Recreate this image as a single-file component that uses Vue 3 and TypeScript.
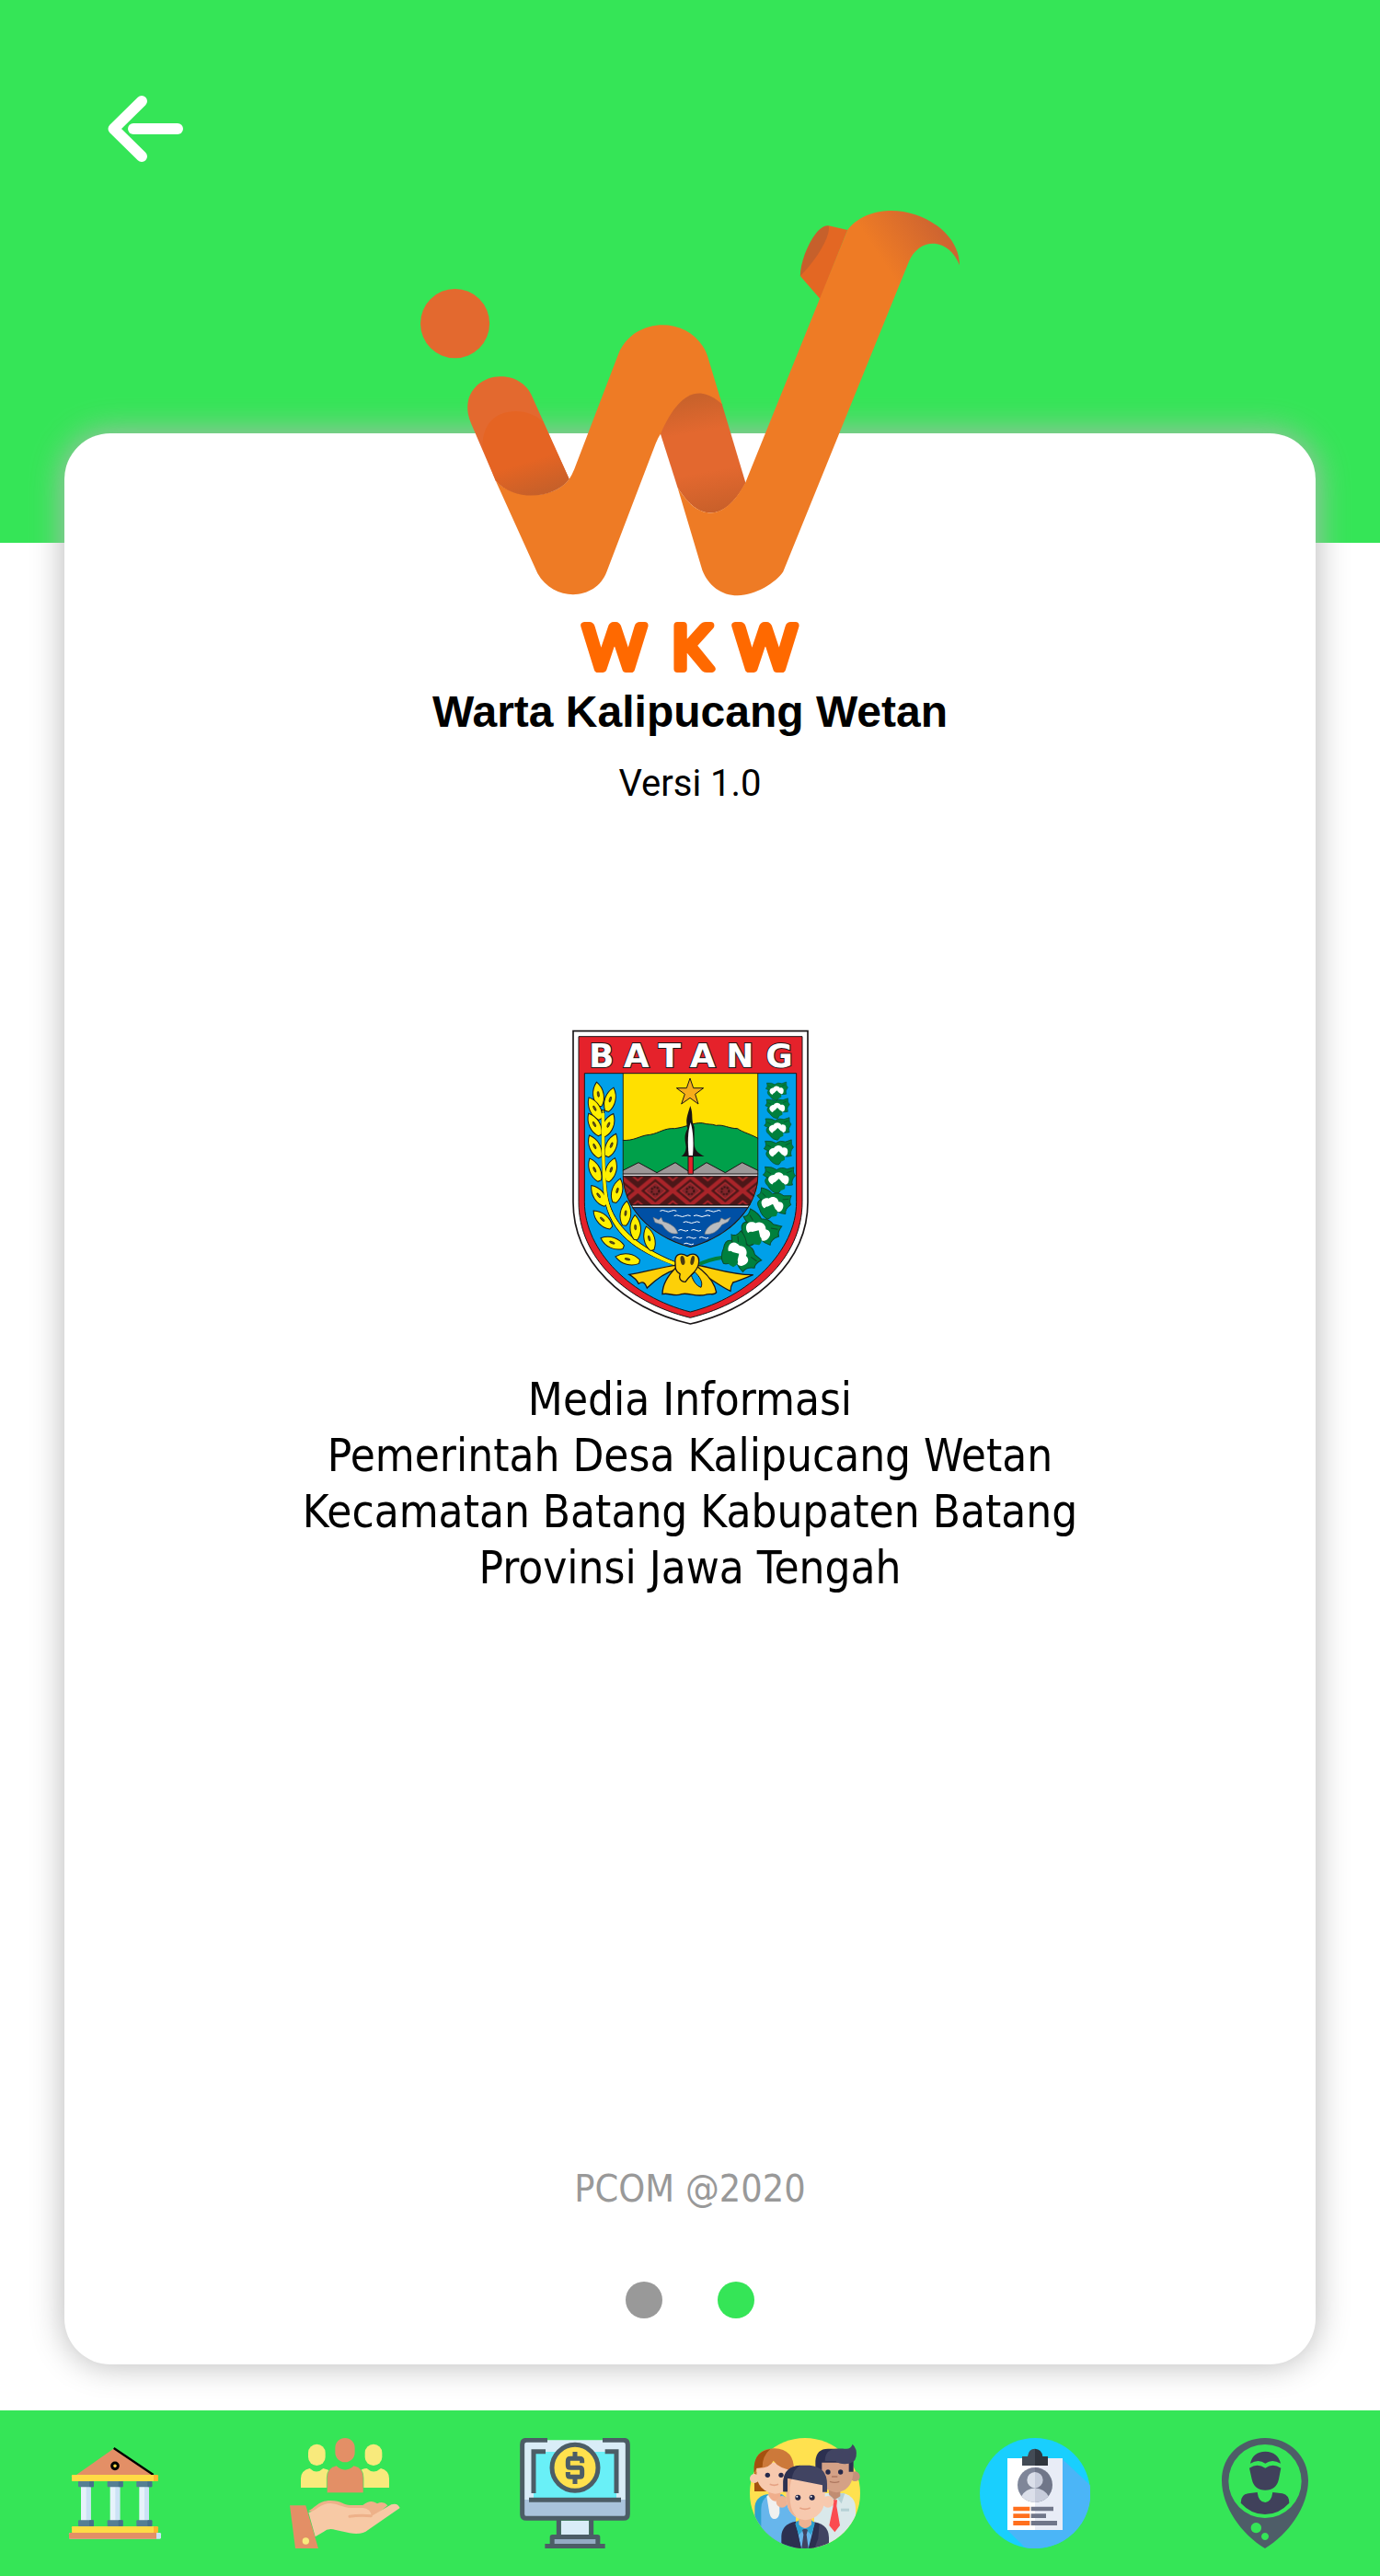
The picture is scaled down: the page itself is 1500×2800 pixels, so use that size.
<script setup lang="ts">
import { ref } from 'vue'

interface Leaf { x: number; y: number; r: number }
interface Boll { x: number; y: number; r: number; s: number }

const addressLines: string[] = [
  'Media Informasi',
  'Pemerintah Desa Kalipucang Wetan',
  'Kecamatan Batang Kabupaten Batang',
  'Provinsi Jawa Tengah',
]

const slides: string[] = ['Slide 1', 'Slide 2']
const current = ref<number>(1)

const riceLeaves: Leaf[] = [
  { x: 121, y: 238, r: -8 }, { x: 160, y: 255, r: 16 }, { x: 109, y: 284, r: -28 },
  { x: 154, y: 338, r: 24 }, { x: 108, y: 336, r: -28 }, { x: 164, y: 404, r: 22 },
  { x: 109, y: 408, r: -26 }, { x: 163, y: 484, r: 18 }, { x: 109, y: 484, r: -24 },
  { x: 183, y: 552, r: 14 }, { x: 122, y: 568, r: -36 }, { x: 210, y: 626, r: 6 },
  { x: 134, y: 646, r: -46 }, { x: 242, y: 672, r: -2 }, { x: 166, y: 722, r: -68 },
  { x: 287, y: 708, r: -14 }, { x: 216, y: 776, r: -78 },
]

const bolls: Boll[] = [
  { x: 703, y: 226, r: 0, s: 0.82 }, { x: 705, y: 282, r: 0, s: 0.9 },
  { x: 706, y: 348, r: 0, s: 1 }, { x: 709, y: 424, r: 0, s: 1.1 },
  { x: 710, y: 514, r: 4, s: 1.2 }, { x: 690, y: 596, r: 18, s: 1.3 },
  { x: 644, y: 682, r: 32, s: 1.5 }, { x: 580, y: 758, r: 58, s: 1.5 },
]
</script>

<template>
  <div class="page">
    <header class="top">
      <button class="back" type="button" aria-label="Kembali">
        <svg viewBox="110 100 96 80" width="96" height="80" fill="none" stroke="#fff" stroke-width="12" stroke-linecap="round" stroke-linejoin="round">
          <path d="M154 110 L123.500 140 L154 170" />
          <path d="M145 140 H193" />
        </svg>
      </button>
    </header>

    <main class="card">
      <svg class="logo" viewBox="0 0 620 550" role="img" aria-label="WKW">
        <defs>
          <linearGradient id="hook" gradientUnits="userSpaceOnUse" x1="1290" y1="210" x2="1450" y2="120">
            <stop offset="0" stop-color="#ee7b25" /><stop offset="1" stop-color="#cf6530" />
          </linearGradient>
          <linearGradient id="fold" gradientUnits="userSpaceOnUse" x1="780" y1="700" x2="860" y2="1065">
            <stop offset="0" stop-color="#c9622b" /><stop offset=".3" stop-color="#e3682f" />
            <stop offset=".65" stop-color="#e3682f" /><stop offset="1" stop-color="#c9602a" />
          </linearGradient>
          <linearGradient id="start" gradientUnits="userSpaceOnUse" x1="325" y1="910" x2="362" y2="1010">
            <stop offset="0" stop-color="#e56423" /><stop offset="1" stop-color="#c76029" />
          </linearGradient>
        </defs>
        <g transform="scale(.3954 .3333)">
          <ellipse cx="138" cy="455" rx="95" ry="113" fill="#e3692f" />
          <path fill="#ee7b25" d="M250 968 C300 1030 410 1030 452 962 Q460 948 466 930 L588 552 C630 430 790 425 832 560 L872 718 L780 800 L703 815 Q697 825 690 845 L555 1265 C525 1360 410 1365 365 1270Z" />
          <path fill="#e3692f" d="M182 780 C150 690 205 628 263 628 C310 628 340 660 352 698 L452 962 L250 968Z" />
          <path fill="url(#start)" d="M214 862 C210 790 245 741 305 741 C335 741 362 755 380 775 L452 962 C410 1030 300 1035 250 968Z" />
          <path fill="url(#fold)" d="M703 815 C745 700 800 640 872 718 L937 975 C880 1100 810 1105 750 990Z" />
          <path fill="#e36723" d="M1165 136 L1217 150 L1142 375 L1087 300Z" />
          <path fill="#c6602b" d="M1165 136 C1130 130 1087 240 1087 300 C1130 250 1172 170 1165 136Z" />
          <path fill="url(#hook)" d="M750 990 C810 1105 880 1100 937 972 L1217 150 C1250 100 1300 87 1337 87 C1430 87 1525 165 1525 265 C1495 175 1415 170 1385 255 L1040 1265 C1020 1300 965 1342 915 1342 C870 1342 835 1310 818 1260Z" />
        </g>
        <text class="wordmark" x="228 312 392" y="527">WKW</text>
      </svg>

      <h1 class="title">Warta Kalipucang Wetan</h1>
      <p class="version">Versi 1.0</p>

      <svg class="crest" viewBox="0 0 840 1020" role="img" aria-label="Lambang Kabupaten Batang">
        <defs>
          <clipPath id="field">
            <path d="M200 170 H643 V500 C643 600 560 700 421 738 C280 700 200 600 200 500Z" />
          </clipPath>
          <pattern id="batik" patternUnits="userSpaceOnUse" x="364" y="506" width="114" height="94">
            <rect width="114" height="94" fill="#4c1718" />
            <path d="M57 0 L114 47 L57 94 L0 47Z" fill="none" stroke="#aa2429" stroke-width="13" />
            <path d="M57 20 L90 47 L57 74 L24 47Z" fill="#81252a" stroke="#c12a30" stroke-width="3" />
            <circle cx="57" cy="47" r="12" fill="none" stroke="#32100f" stroke-width="6" stroke-dasharray="6 4" />
            <path d="M-8 20 L16 0 M98 0 L122 20 M-8 74 L16 94 M98 94 L122 74" stroke="#aa2429" stroke-width="6" />
          </pattern>
        </defs>
        <g stroke="#1b1718">
          <path fill="#fff" stroke-width="5" d="M39 32 H804 V590 C804 780 640 935 421 987 C200 935 39 780 39 590Z" />
          <path fill="#e5222b" stroke-width="3" d="M57 50 H786 V590 C786 770 630 915 421 967 C210 915 57 770 57 590Z" />
          <path fill="#00a0e9" stroke-width="3" d="M76 170 H767 V590 C767 750 610 900 421 948 C230 900 76 750 76 590Z" />
        </g>
        <g clip-path="url(#field)" stroke="#1b1718" stroke-width="3">
          <rect x="200" y="170" width="443" height="570" fill="#ffe000" />
          <path fill="#00a04a" d="M195 388 C240 392 255 372 290 370 C320 365 335 348 370 350 C410 345 430 330 460 332 C480 338 490 334 505 340 C530 336 545 350 575 350 C590 362 625 370 648 386 V500 H195Z" />
          <path fill="#9d9898" d="M195 490 L252 461 L312 494 L372 461 L422 494 L474 461 L535 494 L590 461 L648 490 V500 H195Z" />
          <rect x="195" y="498" width="453" height="10" fill="#ded6d7" />
          <rect x="195" y="506" width="453" height="94" fill="url(#batik)" />
          <rect x="195" y="600" width="453" height="9" fill="#ded6d7" />
          <rect x="195" y="608" width="453" height="140" fill="#0050a5" />
          <g fill="none" stroke="#fff">
            <path d="M322 619 q9 -5 18 0 t18 0 t18 0 M470 619 q9 -5 18 0 t18 0 t14 0 M368 635 q9 -5 18 0 t18 0 t18 0 M432 635 q9 -5 18 0 t18 0 t18 0 M398 656 q9 -5 18 0 t18 0 t18 0 M382 682 q8 -5 16 0 t16 0 M424 682 q8 -5 16 0 t16 0 M362 706 q8 -5 16 0 t16 0 M408 706 q8 -5 16 0 t16 0 M450 706 q8 -5 16 0 t14 0 M400 726 q8 -5 16 0 t16 0" />
          </g>
          <g fill="#b9bcc0" stroke="#777b80" stroke-width="2">
            <path d="M300 640 L318 648 L326 640 L332 653 C358 660 375 672 380 692 C355 698 340 680 330 664 L306 656Z" />
            <path d="M552 640 L534 648 L522 642 L516 654 C486 660 472 676 468 694 C495 698 512 682 524 664 L544 654Z" />
          </g>
          <path fill="none" stroke-width="6" d="M200 170 V500 C200 600 280 700 421 738 C560 700 643 600 643 500 V170" />
        </g>
        <path fill="#f6ad1b" stroke="#1b1718" stroke-width="3" d="M420 186 L431 218 H464 L437 238 L447 270 L420 250 L392 270 L403 238 L376 218 H409Z" />
        <path fill="#171315" d="M421 276 C410 310 405 325 412 350 C398 375 405 390 407 410 C406 430 398 436 391 441 H467 C445 430 433 420 434 395 V345 C422 320 432 305 421 276Z" />
        <path fill="#fff" d="M422 330 C412 360 412 400 416 438 H429 C432 400 431 360 422 330Z" />
        <path fill="#e5222b" stroke="#1b1718" stroke-width="3" d="M414 441 H430 V498 H414Z" />

        <text class="crest-name" x="131 245 353 461 583 711" y="150">BATANG</text>

        <g fill="#fff000" stroke="#1b1718" stroke-width="3">
          <path d="M132 290 C134 400 130 510 142 580 C160 690 240 750 372 796 L374 786 C250 735 172 670 152 575 C140 510 142 400 140 290Z" />
          <g v-for="(leaf, i) in riceLeaves" :key="i" :transform="`translate(${leaf.x} ${leaf.y}) rotate(${leaf.r})`">
            <path d="M0 -40 C22 -16 22 18 6 40 H-6 C-22 18 -22 -16 0 -40Z" />
            <ellipse rx="3" ry="9" fill="#6e5a12" stroke-width="2" />
          </g>
          <path fill="none" stroke="#fff000" stroke-width="10" d="M136 300 C138 400 134 510 147 578 C166 680 245 745 370 791" />
        </g>

        <path d="M450 792 Q500 770 552 768" fill="none" stroke="#00803d" stroke-width="12" />
        <g v-for="(boll, i) in bolls" :key="i" :transform="`translate(${boll.x} ${boll.y}) rotate(${boll.r}) scale(${boll.s})`">
          <path fill="#00803d" stroke="#0a4a2a" stroke-width="2" d="M0 6 C-14 2 -26 4 -44 -8 Q-34 -14 -40 -30 Q-20 -32 -8 -24 Q4 -34 20 -28 L38 -34 Q36 -18 44 -12 Q32 2 38 14 Q14 20 0 6 M-28 22 Q-42 10 -34 0 Q-12 -8 0 10 Q14 28 0 40 Q-16 40 -28 22Z" />
          <path fill="#fff" d="M-26 10 C-34 -2 -22 -10 -14 -10 C-6 -22 8 -18 12 -10 C24 -14 30 -4 26 8 C24 16 10 18 4 10 C-4 20 -20 20 -26 10Z" />
          <path fill="#00803d" d="M-18 26 Q-18 12 -10 10 L0 0 L10 10 Q20 12 18 26 Q0 38 -18 26Z" />
          <path d="M20 -18 L34 -24 M-34 -18 L-22 -12" stroke="#0a4a2a" stroke-width="2" />
        </g>

        <g stroke="#1b1718" stroke-width="4" fill="#fdd008">
          <path d="M375 796 C330 800 270 820 222 826 C245 840 250 850 252 856 C265 848 272 850 280 870 C300 850 330 822 378 808Z" />
          <path d="M446 796 C500 806 560 828 626 827 C595 840 575 848 560 852 C555 860 552 868 552 880 C520 866 490 840 440 812Z" />
          <path d="M378 800 C350 826 330 860 330 890 C350 884 370 900 392 890 C415 884 440 900 470 892 C485 886 500 896 506 884 C500 850 470 820 444 800Z" />
          <path fill="#00a0e9" stroke-width="3" d="M424 828 C432 850 440 862 456 868 C464 850 450 832 436 818Z" />
          <path stroke="none" d="M372 790 C368 760 388 752 411 766 C432 752 454 762 448 792 C444 812 424 820 408 836 L387 824 C374 815 372 805 372 790Z" />
          <path fill="none" d="M387 824 C372 815 372 805 372 790 C368 760 388 752 411 766 C432 752 454 762 448 792 C444 816 424 822 405 850 C385 848 384 836 388 822" />
        </g>
        <ellipse cx="396" cy="780" rx="7" ry="15" fill="#4b3b12" transform="rotate(-10 396 780)" />
        <ellipse cx="428" cy="780" rx="6" ry="15" fill="#4b3b12" transform="rotate(12 428 780)" />
      </svg>

      <address class="about">
        <span v-for="line in addressLines" :key="line">{{ line }}</span>
      </address>

      <footer class="bottom">
        <small class="copyright">PCOM @2020</small>
        <div class="dots">
          <button
            v-for="(slide, i) in slides"
            :key="slide"
            type="button"
            class="dot"
            :class="{ active: i === current }"
            :aria-label="slide"
            @click="current = i"
          ></button>
        </div>
      </footer>
    </main>

    <nav class="tabs">
      <a class="tab" href="#pemerintahan" aria-label="Pemerintahan">
        <svg viewBox="75 90 360 360">
          <path fill="#e38f66" d="M126 212 L254 122 L382 212Z" />
          <path stroke="#000" stroke-width="7" d="M251 123 L380 210" />
          <circle cx="255" cy="181" r="10" fill="#ffda44" stroke="#000" stroke-width="9" />
          <g v-for="x in [135, 230, 325]" :key="x">
            <rect :x="x + 9" y="245" width="32" height="118" fill="#e6f2fb" />
            <rect :x="x + 26" y="245" width="15" height="118" fill="#cbe2f5" />
            <rect :x="x" y="230" width="51" height="20" rx="3" fill="#557f93" />
            <rect :x="x + 36" y="230" width="15" height="20" rx="3" fill="#47708a" />
            <rect :x="x" y="358" width="51" height="20" rx="3" fill="#557f93" />
            <rect :x="x + 36" y="358" width="15" height="20" rx="3" fill="#47708a" />
          </g>
          <rect x="114" y="210" width="282" height="21" rx="4" fill="#ffb62f" />
          <path fill="#ffdb45" d="M118 210 H381 V231 H118 Q114 231 114 227 V214 Q114 210 118 210Z" />
          <rect x="114" y="378" width="282" height="21" rx="4" fill="#ffb62f" />
          <path fill="#ffdb45" d="M118 378 H381 V399 H118 Q114 399 114 395 V382 Q114 378 118 378Z" />
          <rect x="105" y="399" width="300" height="20" rx="4" fill="#cbe2f5" />
          <path fill="#e38f66" d="M109 399 H390 V419 H109 Q105 419 105 415 V403 Q105 399 109 399Z" />
        </svg>
      </a>
      <a class="tab" href="#layanan" aria-label="Layanan">
        <svg viewBox="825 90 360 360">
          <g fill="#f8ea7c">
            <rect x="885" y="110" width="56" height="70" rx="28" />
            <rect x="1070" y="110" width="56" height="70" rx="28" />
            <path d="M861 252 V222 Q861 196 890 189 Q912 210 934 189 Q950 192 960 200 V252Z" />
            <path d="M1149 252 V222 Q1149 196 1122 189 Q1098 210 1076 189 Q1060 190 1050 200 V252Z" />
          </g>
          <path fill="#e38f66" stroke="#35e557" stroke-width="2" d="M946 269 V220 Q946 186 977 180 Q1005 206 1034 180 Q1065 186 1065 220 V269Z" />
          <rect x="973" y="90" width="64" height="79" rx="32" fill="#e38f66" />
          <path fill="#edb189" d="M884 328 C905 322 915 294 958 294 C995 294 1000 310 1025 309 H1063 C1085 290 1100 297 1110 304 Q1130 294 1144 310 L1095 350 L1010 348Z" />
          <path fill="#f7c9a5" d="M886 333 C915 326 925 303 958 303 C988 305 1000 320 1030 318 H1063 Q1088 320 1092 344 L1156 307 Q1176 300 1184 318 L1080 390 Q1062 406 1020 400 L975 390 Q950 382 935 396 L908 412Z" />
          <path stroke="#edb189" stroke-width="9" stroke-linecap="round" fill="none" d="M1020 346 Q1050 341 1090 344" />
          <path fill="#e38f66" d="M825 310 H877 L918 450 H843Z" />
          <circle cx="877" cy="426" r="11" fill="#f8ea7c" />
        </svg>
      </a>
      <a class="tab" href="#keuangan" aria-label="Keuangan">
        <svg viewBox="75 90 360 360">
          <rect x="82" y="97" width="346" height="255" rx="12" fill="#d9edf7" />
          <path fill="#a9c3db" d="M82 291 H428 V340 Q428 352 416 352 H94 Q82 352 82 340Z" />
          <rect x="120" y="135" width="270" height="152" fill="#69f0f7" />
          <g fill="none" stroke="#4c5d66" stroke-width="15">
            <path d="M165 97 H97 Q83 97 83 111 V338 Q83 352 97 352 H413 Q427 352 427 338 V111 Q427 97 413 97 H345" />
            <path d="M120 270 V134 H159 M353 134 H390 V270 M105 292 H405" />
            <path fill="#d9edf7" d="M202 355 V412 M308 355 V412" />
          </g>
          <rect x="210" y="360" width="90" height="46" fill="#d9edf7" />
          <path fill="#4c5d66" d="M173 413 Q173 405 181 405 H328 Q337 405 337 413 V435 H353 V450 H157 V435 H173Z" />
          <rect x="188" y="420" width="134" height="15" fill="#94abc3" />
          <circle cx="255" cy="187" r="75" fill="#ffe14d" stroke="#4c5d66" stroke-width="15" />
          <path fill="none" stroke="#4c5d66" stroke-width="15" d="M278 172 V164 Q278 157 270 157 H240 Q232 157 232 165 V179 Q232 187 240 187 H270 Q278 187 278 195 V209 Q278 217 270 217 H240 Q232 217 232 209 V201 M255 135 V157 M255 217 V240" />
        </svg>
      </a>
      <a class="tab" href="#warga" aria-label="Warga">
        <svg viewBox="825 90 360 360">
          <defs><clipPath id="round"><path d="M820 80 H1190 V270 H1185 A180 180 0 0 1 825 270 H820Z" /></clipPath></defs>
          <circle cx="1005" cy="270" r="180" fill="#ffe14f" />
          <g clip-path="url(#round)">
            <path fill="#a4510f" d="M840 200 H880 V264 H840Z" />
            <path fill="#2da1cf" d="M841 450 V320 Q841 282 880 274 H930 L975 310 V450Z" />
            <path fill="#67b6ec" d="M862 450 V320 Q862 290 888 276 L905 320 L930 276 L975 310 V450Z" />
            <path fill="#f1f1ef" d="M880 280 L890 272 H922 V335 Q918 354 905 354 Q894 354 889 335Z" />
            <path fill="#f0ae8c" d="M886 250 H925 V285 Q905 310 886 278Z" />
            <circle cx="840" cy="222" r="15" fill="#f7c9ae" />
            <path fill="#f7c9ae" d="M847 170 H965 V210 Q962 268 908 272 Q850 264 847 210Z" />
            <path fill="#cc793a" d="M839 200 Q836 124 905 124 Q970 126 969 196 Q920 190 902 164 Q890 190 847 188 L846 210Z" />
            <path fill="#a4510f" d="M839 204 V184 Q842 134 892 126 Q866 148 866 185 L847 188Z" />
            <circle cx="883" cy="211" r="8" fill="#26294a" /><circle cx="927" cy="211" r="8" fill="#26294a" />
            <path d="M890 241 Q905 247 918 241" fill="none" stroke="#e6a284" stroke-width="5" />
            <path fill="#d9e8ea" d="M1035 450 V290 Q1040 272 1075 270 H1130 Q1170 280 1170 320 V450Z" />
            <path fill="#b5d0d5" d="M1082 272 L1092 300 L1110 286 L1124 304 L1135 270Z" />
            <path fill="#c18d72" d="M1083 245 H1120 V280 L1102 292 L1083 274Z" />
            <circle cx="1168" cy="215" r="16" fill="#c3917b" />
            <path fill="#d4a186" d="M1052 160 H1162 V210 Q1155 262 1108 268 Q1060 262 1052 210Z" />
            <path fill="#2c3050" d="M1039 195 V165 Q1042 125 1080 125 H1130 L1163 165 V200 H1148 V170 H1060 V200Z" />
            <path fill="#414462" d="M1070 165 Q1070 125 1110 125 H1140 Q1155 125 1160 110 Q1176 125 1172 150 Q1168 174 1135 175 Q1115 175 1105 165Z" />
            <circle cx="1080" cy="201" r="8" fill="#26294a" /><circle cx="1121" cy="201" r="8" fill="#26294a" />
            <path d="M1092 216 H1111 M1086 232 Q1102 238 1117 232" fill="none" stroke="#ad7860" stroke-width="4" />
            <path fill="#fb4b50" d="M1095 292 H1110 L1108 312 L1119 375 L1102 397 L1084 375 L1097 312Z" />
            <rect x="1122" y="320" width="27" height="9" fill="#b5d0d5" />
            <path fill="#2c3050" d="M928 450 V410 Q930 370 975 362 H1000 V450Z" />
            <path fill="#414462" d="M1020 362 Q1083 365 1083 415 V450 H1000Z" />
            <path fill="#67b6ec" d="M975 362 L1005 384 L1037 362 L1020 450 H992Z" />
            <path fill="#2da1cf" d="M972 370 L985 358 L1005 384 L985 406Z M1038 370 L1026 358 L1005 384 L1025 406Z" />
            <path fill="#2c3050" d="M955 370 L972 366 L993 450 H970 L960 418Z M1052 370 L1038 366 L1016 450 H1036 L1048 418Z" />
            <path fill="#414462" d="M996 390 Q1005 382 1014 390 L1010 405 L1016 450 H994 L1000 405Z" />
            <path fill="#edb292" d="M985 345 H1026 V372 Q1005 396 985 372Z" />
            <circle cx="930" cy="298" r="19" fill="#edb292" /><circle cx="1080" cy="298" r="19" fill="#f7c9ae" />
            <path fill="#f7c9ae" d="M944 215 H1070 V290 Q1065 350 1006 358 Q948 350 944 290Z" />
            <path fill="#edb292" d="M944 215 H965 Q950 245 957 300 Q960 330 978 348 Q948 335 944 290Z" />
            <path fill="#414462" d="M934 265 V235 Q934 179 995 179 H1020 Q1077 184 1077 240 V266 H1062 V244 L948 221 V265Z" />
            <path fill="#2c3050" d="M934 265 V230 Q940 182 990 179 Q966 192 962 223 L948 221 V265Z" />
            <circle cx="982" cy="284" r="9" fill="#26294a" /><circle cx="1028" cy="284" r="9" fill="#26294a" />
            <circle cx="979" cy="281" r="3" fill="#fff" /><circle cx="1025" cy="281" r="3" fill="#fff" />
            <path d="M988 318 Q1005 326 1022 318" fill="none" stroke="#e6a284" stroke-width="5" />
          </g>
        </svg>
      </a>
      <a class="tab" href="#data" aria-label="Data penduduk">
        <svg viewBox="75 90 360 360">
          <circle cx="255" cy="270" r="180" fill="#19cffe" />
          <path fill="#4bb5f7" d="M345 160 L434 243 A180 180 0 0 1 222 447 L165 390Z" />
          <rect x="165" y="156" width="90" height="234" fill="#fff" />
          <rect x="255" y="156" width="90" height="234" fill="#e8ecf6" />
          <path fill="#434b55" d="M213 150 H231 Q234 125 255 125 V180 H213Z" />
          <path fill="#30363e" d="M255 125 Q277 126 280 150 H297 V180 H255Z" />
          <path fill="#7f8699" d="M255 186 A57 57 0 0 0 255 300Z" />
          <path fill="#707689" d="M255 186 A57 57 0 0 1 255 300Z" />
          <path fill="#dbdfea" d="M255 201 A26 26 0 0 0 255 253 Q224 256 211 280 Q228 300 255 300Z" />
          <path fill="#c7ccdb" d="M255 201 A26 26 0 0 1 255 253 Q286 256 299 280 Q282 300 255 300Z" />
          <path fill="#ff6f1d" d="M184 314 h54 v14 h-54z M184 337 h54 v14 h-54z M184 360 h54 v15 h-54z" />
          <path fill="#707689" d="M242 314 h73 v14 h-73z M242 337 h49 v14 h-49z M242 360 h85 v15 h-85z" />
        </svg>
      </a>
      <a class="tab" href="#profil" aria-label="Profil">
        <svg viewBox="825 90 360 360">
          <path fill="#4e5d68" fill-rule="evenodd" d="M1005 90 C1085 90 1146 150 1146 228 C1146 315 1080 405 1005 450 C930 405 864 315 864 228 C864 150 925 90 1005 90Z M1005 111 A119 120 0 1 0 1005 351 A119 120 0 1 0 1005 111Z M976 366 a17 17 0 1 0 .1 0Z M1005 399 a12 12 0 1 0 .1 0Z" />
          <g fill="#40415b">
            <path d="M957 173 Q965 135 1006 134 Q1047 135 1056 173 Q1028 157 1006 173 Q984 157 957 173Z" />
            <path d="M954 188 Q980 170 1006 188 Q1030 170 1057 188 L1050 224 Q1042 260 1006 260 Q970 260 962 224Z" />
            <path d="M926 302 Q926 274 950 271 L980 267 Q984 300 1006 300 Q1026 298 1030 267 L1062 271 Q1084 276 1084 302 Q1050 339 1005 339 Q960 339 926 302Z" />
          </g>
        </svg>
      </a>
    </nav>
  </div>
</template>

<style>
body {
  margin: 0;
  background: #fff;
}
</style>

<style scoped>
.page {
  display: flex;
  flex-direction: column;
  min-height: 100vh;
  color: #000;
}

.top {
  box-sizing: border-box;
  height: 590px;
  padding: 100px 110px;
  background: #35e557;
}

.back {
  display: block;
  padding: 0;
  border: 0;
  background: none;
  cursor: pointer;
}

.back svg {
  display: block;
}

.card {
  display: flex;
  flex: 1;
  flex-direction: column;
  align-items: center;
  margin: -119px 70px 50px;
  border-radius: 50px;
  background: #fff;
  box-shadow: 0 0 36px #b6b6b6;
  text-align: center;
}

.logo {
  display: block;
  width: 620px;
  height: 550px;
  margin-top: -271px;
}

.wordmark {
  fill: #ff6900;
  stroke: #ff6900;
  stroke-width: 8px;
  stroke-linejoin: round;
  font-family: Lato, sans-serif;
  font-size: 65px;
  text-anchor: middle;
}

.title {
  margin: 0;
  font: bold 48px/48px "Liberation Sans", Arial, sans-serif;
}

.version {
  margin: 29px 0 0;
  font: 40px/50px Roboto, sans-serif;
}

.crest {
  display: block;
  width: 280px;
  height: 340px;
  margin-top: 233px;
}

.crest-name {
  fill: #fff;
  stroke: #1b1718;
  stroke-width: 6px;
  paint-order: stroke;
  font-family: "DejaVu Sans", sans-serif;
  font-size: 108px;
  font-weight: bold;
  text-anchor: middle;
}

.about {
  display: flex;
  flex-direction: column;
  margin-top: 41px;
  font: 49px/61px "DejaVu Sans Condensed", "Noto Sans", sans-serif;
}

.bottom {
  display: flex;
  flex-direction: column;
  align-items: center;
  gap: 71px;
  margin-top: auto;
  padding-bottom: 50px;
}

.copyright {
  color: #999;
  font: 41px/60px "DejaVu Sans Condensed", "Noto Sans", sans-serif;
}

.dots {
  display: flex;
  gap: 60px;
}

.dot {
  width: 40px;
  height: 40px;
  padding: 0;
  border: 0;
  border-radius: 50%;
  background: #999;
  cursor: pointer;
}

.dot.active {
  background: #35e557;
}

.tabs {
  display: grid;
  grid-template-columns: repeat(6, 1fr);
  height: 180px;
  background: #35e557;
}

.tab {
  display: flex;
  align-items: center;
  justify-content: center;
}

.tab svg {
  width: 120px;
  height: 120px;
}
</style>
